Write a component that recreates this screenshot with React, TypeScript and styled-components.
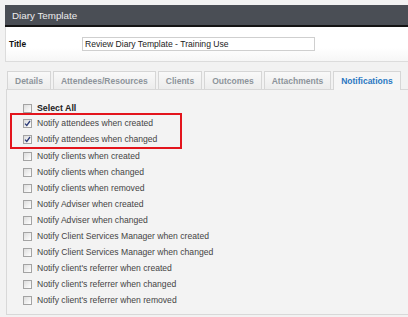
import React from 'react';
import styled, { createGlobalStyle } from 'styled-components';

const GlobalStyle = createGlobalStyle`
  html, body {
    margin: 0;
    padding: 0;
    background: #f2f2f2;
    overflow: hidden;
  }
  body {
    font-family: "Liberation Sans", Arial, sans-serif;
  }
`;

const Page = styled.div`
  padding: 5px 0 0 5px;
  width: 420px;
`;

const Header = styled.div`
  height: 20px;
  background: #4a4e55;
  border-bottom: 2px solid #141414;
  color: #ececec;
  font-size: 9.8px;
  display: flex;
  align-items: center;
  padding-left: 7px;
`;

const TitleSection = styled.div`
  height: 34px;
  background: linear-gradient(#ffffff 60%, #f6f6f6);
  border: 1px solid #dcdcdc;
  border-top: none;
  display: flex;
  align-items: center;
  padding-left: 3px;
  margin-bottom: 9px;
`;

const FieldLabel = styled.label`
  width: 73px;
  font-size: 8.4px;
  font-weight: bold;
  color: #111;
`;

const TextInput = styled.input`
  box-sizing: border-box;
  width: 233px;
  height: 14px;
  border: 1px solid #cfcfcf;
  background: #fff;
  font-family: inherit;
  font-size: 8.6px;
  color: #222;
  padding: 0 2px;
  margin-top: -1px;
  outline: none;
`;

const TabArea = styled.div`
  margin-left: 1px;
`;

const TabRow = styled.div`
  display: flex;
  gap: 2px;
  padding-left: 1px;
  height: 18px;
`;

const Tab = styled.div<{ $active?: boolean }>`
  box-sizing: border-box;
  height: ${p => (p.$active ? '19px' : '18px')};
  padding: 0 7px;
  display: flex;
  align-items: center;
  border: 1px solid #d6d6d6;
  border-bottom: none;
  background: ${p => (p.$active ? '#f6f6f6' : 'linear-gradient(#f9f9f9, #ececec)')};
  color: ${p => (p.$active ? '#2a78c2' : '#8d949b')};
  font-size: 8.5px;
  font-weight: bold;
  position: relative;
  z-index: ${p => (p.$active ? 1 : 0)};
`;

const TabPanel = styled.div`
  border: 1px solid #d8d8d8;
  background: #f3f3f3;
  padding: 10px 0 7px 16px;
  height: 207px;
`;

const Row = styled.label`
  display: flex;
  align-items: center;
  height: 16px;
  gap: 5px;
  font-size: 8.6px;
  color: #444;
`;

const SelectAllText = styled.span`
  font-weight: bold;
  font-size: 8.8px;
  color: #222;
`;

const Box = styled.span`
  box-sizing: border-box;
  width: 9px;
  height: 9px;
  border: 1px solid #a3a3a3;
  background: linear-gradient(135deg, #dcdcdc, #ffffff);
  display: flex;
  align-items: center;
  justify-content: center;
  flex-shrink: 0;
`;

const Highlight = styled.div`
  box-sizing: border-box;
  border: 2px solid #e3141c;
  width: 172px;
  margin: -3px 0 -1px -13px;
  padding-left: 11px;
`;

const CheckBox: React.FC<{ checked?: boolean }> = ({ checked }) => (
  <Box>
    {checked && (
      <svg width="7" height="7" viewBox="0 0 7 7">
        <path d="M1 3.6 L2.8 5.4 L6 1" fill="none" stroke="#2c3b78" strokeWidth="1.3" />
      </svg>
    )}
  </Box>
);

const tabs = ['Details', 'Attendees/Resources', 'Clients', 'Outcomes', 'Attachments', 'Notifications'];

const highlighted = ['Notify attendees when created', 'Notify attendees when changed'];

const options = [
  'Notify clients when created',
  'Notify clients when changed',
  'Notify clients when removed',
  'Notify Adviser when created',
  'Notify Adviser when changed',
  'Notify Client Services Manager when created',
  'Notify Client Services Manager when changed',
  "Notify client's referrer when created",
  "Notify client's referrer when changed",
  "Notify client's referrer when removed",
];

export default function App() {
  return (
    <>
      <GlobalStyle />
      <Page>
        <Header>Diary Template</Header>
        <TitleSection>
          <FieldLabel>Title</FieldLabel>
          <TextInput readOnly value="Review Diary Template - Training Use" />
        </TitleSection>

        <TabArea>
          <TabRow>
            {tabs.map(t => (
              <Tab key={t} $active={t === 'Notifications'}>
                {t}
              </Tab>
            ))}
          </TabRow>
          <TabPanel>
            <Row>
              <CheckBox />
              <SelectAllText>Select All</SelectAllText>
            </Row>
            <Highlight>
              {highlighted.map(h => (
                <Row key={h}>
                  <CheckBox checked />
                  <span>{h}</span>
                </Row>
              ))}
            </Highlight>
            {options.map(o => (
              <Row key={o}>
                <CheckBox />
                <span>{o}</span>
              </Row>
            ))}
          </TabPanel>
        </TabArea>
      </Page>
    </>
  );
}
